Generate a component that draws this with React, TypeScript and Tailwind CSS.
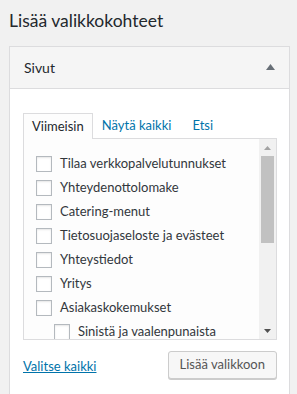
export default function App() {
    const pages = [
        { title: "Tilaa verkkopalvelutunnukset", child: false },
        { title: "Yhteydenottolomake", child: false },
        { title: "Catering-menut", child: false },
        { title: "Tietosuojaseloste ja evästeet", child: false },
        { title: "Yhteystiedot", child: false },
        { title: "Yritys", child: false },
        { title: "Asiakaskokemukset", child: false },
        { title: "Sinistä ja vaalenpunaista", child: true },
    ];

    return (
        <div
            className="w-[297px] h-[394px] overflow-hidden bg-[#f1f1f1] text-[#23282d]"
            style={{ fontFamily: 'Lato, "Noto Sans", sans-serif' }}
        >
            <h2 className="pl-[9px] pt-[9px] text-[17.5px] leading-[24px] font-normal">Lisää valikkokohteet</h2>

            <div className="ml-[9px] mt-[13px] w-[281px] border border-[#dcdcde] bg-white">
                {/* section header */}
                <div className="h-[42px] flex items-center justify-between pl-[14px] pr-[14px] bg-[#f5f5f5] border-b border-[#dcdcde]">
                    <h3 className="text-[14px] font-normal">Sivut</h3>
                    <svg width="9" height="6" viewBox="0 0 9 6" className="mt-[-1px]">
                        <polygon points="4.5,0 9,6 0,6" fill="#686f77" />
                    </svg>
                </div>

                <div className="pl-[13px] pr-[12px] pt-[24px] pb-[20px]">
                    {/* tabs */}
                    <div className="flex items-end h-[25px] text-[13px]">
                        <div className="h-[26px] -mb-px px-[8px] flex items-center border border-b-0 border-[#dcdcde] bg-[#fdfdfd] text-[#23282d] relative z-10">
                            Viimeisin
                        </div>
                        <div className="h-[25px] pl-[9px] pr-[10px] flex items-center text-[#0073aa]">Näytä kaikki</div>
                        <div className="h-[25px] pl-[11px] pr-[9px] flex items-center text-[#0073aa]">Etsi</div>
                    </div>

                    {/* list */}
                    <div className="h-[202px] border border-[#dcdcde] bg-[#fdfdfd] flex overflow-hidden">
                        <ul className="flex-1 pl-[12px] pt-[17px] flex flex-col gap-[8px] text-[13px] text-[#32373c] overflow-hidden">
                            {pages.map((p) => (
                                <li key={p.title} className={"flex items-center h-[16px] shrink-0 " + (p.child ? "pl-[18px]" : "")}>
                                    <span className="w-[16px] h-[16px] border border-[#b4b9be] bg-white shadow-[inset_0_1px_2px_rgba(0,0,0,0.1)] shrink-0" />
                                    <span className="ml-[8px] whitespace-nowrap">{p.title}</span>
                                </li>
                            ))}
                        </ul>
                        {/* scrollbar */}
                        <div className="w-[17px] bg-[#f1f1f1] flex flex-col items-center">
                            <div className="h-[17px] flex items-center justify-center">
                                <svg width="7" height="4" viewBox="0 0 7 4">
                                    <polygon points="3.5,0 7,4 0,4" fill="#a3a3a3" />
                                </svg>
                            </div>
                            <div className="w-[13px] h-[87px] bg-[#c1c1c1]" />
                            <div className="flex-1" />
                            <div className="h-[17px] flex items-center justify-center">
                                <svg width="7" height="4" viewBox="0 0 7 4">
                                    <polygon points="0,0 7,0 3.5,4" fill="#505050" />
                                </svg>
                            </div>
                        </div>
                    </div>

                    {/* actions */}
                    <div className="mt-[11px] flex items-center justify-between">
                        <a href="#" className="text-[13px] text-[#0073aa] underline mt-[3px]">Valitse kaikki</a>
                        <button className="h-[28px] px-[11px] text-[13px] text-[#555] bg-[#f7f7f7] border border-[#cccccc] rounded-[3px] shadow-[0_1px_0_#cccccc]">
                            Lisää valikkoon
                        </button>
                    </div>
                </div>
            </div>
        </div>
    );
}
